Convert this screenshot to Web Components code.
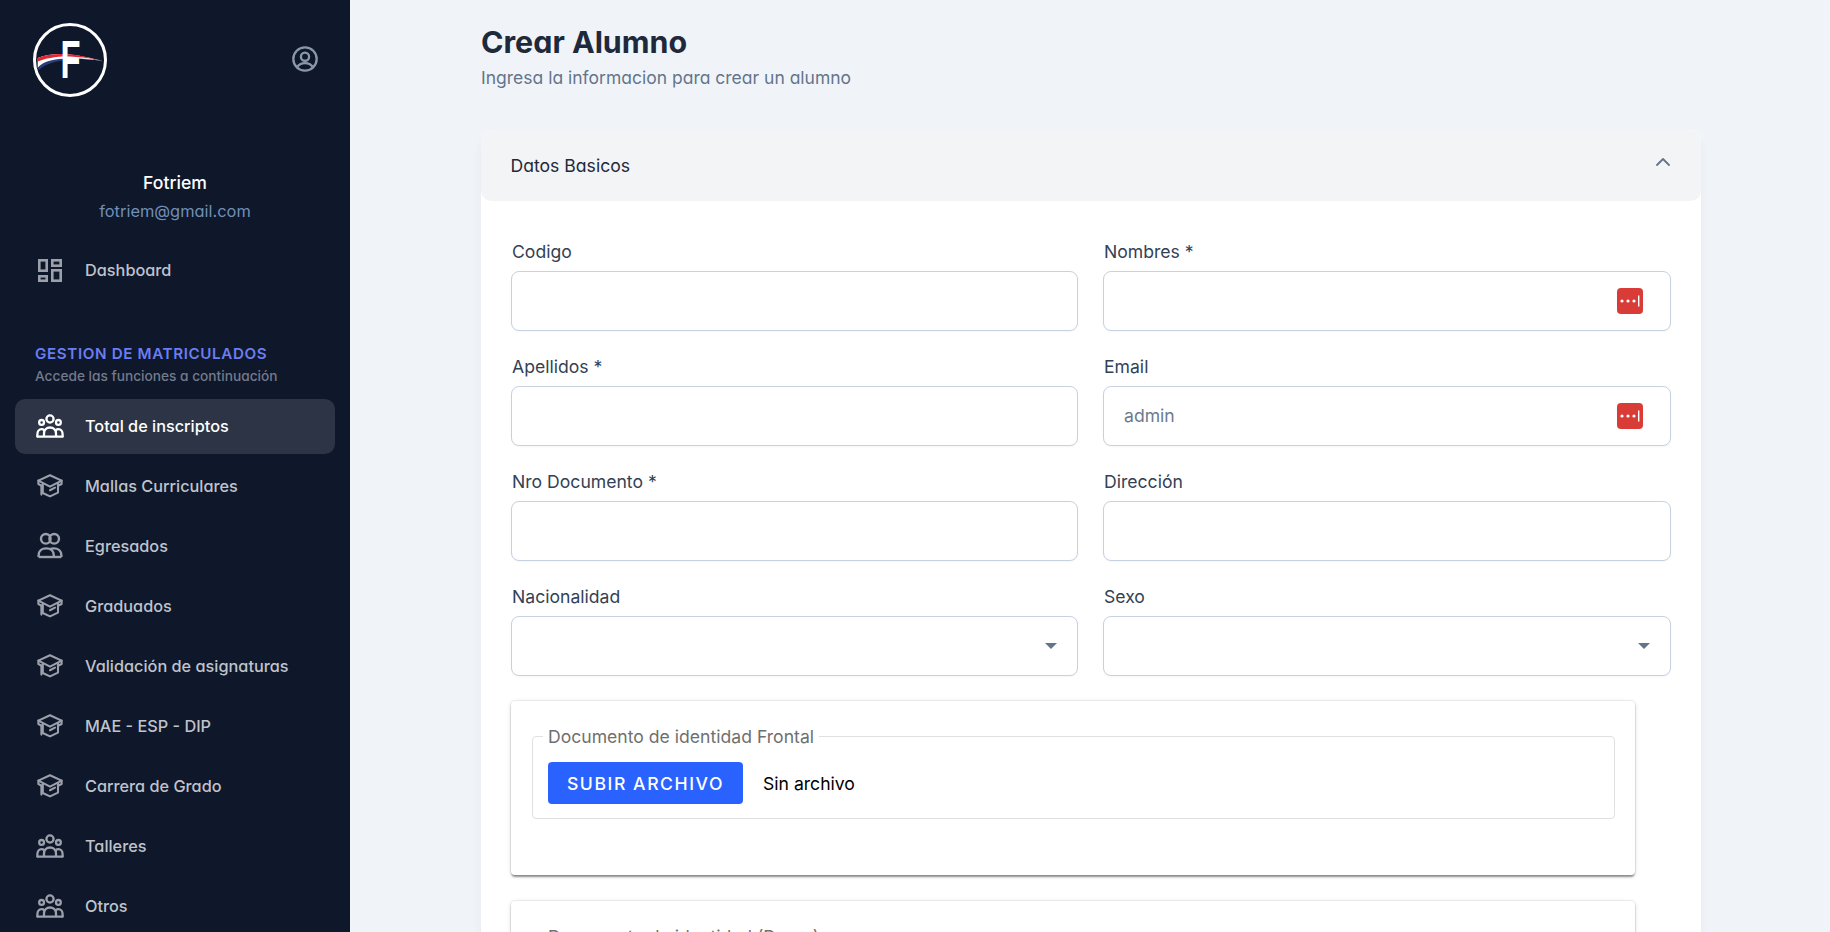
<!DOCTYPE html>
<html lang="es">
<head>
<meta charset="utf-8">
<title>Crear Alumno</title>
<style>
  html, body { margin: 0; height: 100%; overflow: hidden; background: #f0f4f9; }
  body { font-family: Inter, "Liberation Sans", sans-serif; }
</style>
</head>
<body>
<app-shell>
  <side-bar slot="side" name="Fotriem" email="fotriem@gmail.com">
    <nav-item icon="grid">Dashboard</nav-item>
    <nav-section slot="section" title-text="GESTION DE MATRICULADOS">Accede las funciones a continuación</nav-section>
    <nav-item slot="menu" icon="group" active>Total de inscriptos</nav-item>
    <nav-item slot="menu" icon="cap">Mallas Curriculares</nav-item>
    <nav-item slot="menu" icon="pair">Egresados</nav-item>
    <nav-item slot="menu" icon="cap">Graduados</nav-item>
    <nav-item slot="menu" icon="cap">Validación de asignaturas</nav-item>
    <nav-item slot="menu" icon="cap">MAE - ESP - DIP</nav-item>
    <nav-item slot="menu" icon="cap">Carrera de Grado</nav-item>
    <nav-item slot="menu" icon="group">Talleres</nav-item>
    <nav-item slot="menu" icon="group">Otros</nav-item>
  </side-bar>

  <page-head heading="Crear Alumno">Ingresa la informacion para crear un alumno</page-head>

  <acc-card heading="Datos Basicos">
    <form-grid>
      <form-field label="Codigo"></form-field>
      <form-field label="Nombres *" keyed></form-field>
      <form-field label="Apellidos *"></form-field>
      <form-field label="Email" value="admin" keyed></form-field>
      <form-field label="Nro Documento *"></form-field>
      <form-field label="Dirección"></form-field>
      <form-field label="Nacionalidad" select></form-field>
      <form-field label="Sexo" select></form-field>
    </form-grid>
    <file-card legend="Documento de identidad Frontal"></file-card>
    <file-card legend="Documento de identidad (Dorso)"></file-card>
  </acc-card>
</app-shell>

<script>
(function () {
  'use strict';

  const UI_FONT = 'Inter, "Liberation Sans", sans-serif';

  /** Sidebar icons, all drawn on a 28 box with currentColor strokes. */
  const ICONS = {
    grid: `
      <g fill="none" stroke="currentColor" stroke-width="2.6">
        <rect x="3.3" y="4.3" width="7.4" height="10.4"/>
        <rect x="16.3" y="4.3" width="8.4" height="5.4"/>
        <rect x="3.3" y="20.3" width="7.4" height="4.4"/>
        <rect x="16.3" y="14.3" width="8.4" height="10.4"/>
      </g>`,
    group: `
      <g fill="none" stroke="currentColor" stroke-width="2.3" stroke-linecap="round" stroke-linejoin="round">
        <circle cx="14" cy="7" r="3.6"/>
        <circle cx="5.6" cy="10.4" r="2.4"/>
        <circle cx="22.4" cy="10.4" r="2.4"/>
        <path d="M8 24v-2.5c0-3.600 2.700-6 6-6s6 2.400 6 6V24"/>
        <path d="M1.400 24.400v-2.200c0-3 1.900-5 4.200-5 1 0 1.900.3 2.600 1"/>
        <path d="M26.600 24.400v-2.200c0-3-1.900-5-4.200-5-1 0-1.900.3-2.600 1"/>
        <path d="M1.400 24.600h25.200"/>
      </g>`,
    cap: `
      <g fill="none" stroke="currentColor" stroke-width="2.1" stroke-linejoin="round" stroke-linecap="round">
        <path d="M14 3.200 25.600 8.600 14 14.600 2.400 8.600z"/>
        <path d="M2.400 8.600v3.400l3 1.600"/>
        <path d="M6.800 12v9l7.200 3.400 8-3.800v-9"/>
        <path d="M25.600 8.600v3.400l-3.600 1.800"/>
        <path d="M14 18.200l5-2.600"/>
        <path d="M5.400 13.600v9"/>
      </g>`,
    pair: `
      <g fill="none" stroke="currentColor" stroke-width="2.4" stroke-linejoin="round">
        <circle cx="9.800" cy="6.800" r="4.800"/>
        <circle cx="18.200" cy="6.800" r="4.800"/>
        <path d="M2.600 25v-1.600c0-4.400 3.400-7 7.600-7s7.600 2.600 7.600 7V25"/>
        <path d="M14 17.200c1.100-.5 2.400-.8 3.800-.8 4.200 0 7.600 2.600 7.600 7V25"/>
        <path d="M2.600 25h22.800"/>
      </g>`,
  };

  /**
   * Create a shadow root from a style + markup string.
   * @param {HTMLElement} host
   * @param {string} html
   */
  function render(host, html) {
    if (!host.shadowRoot) host.attachShadow({ mode: 'open' });
    host.shadowRoot.innerHTML = html;
  }

  class AppShell extends HTMLElement {
    connectedCallback() {
      render(this, `
        <style>
          :host { display: flex; height: 932px; overflow: hidden; background: #f0f4f9; }
          .side { flex: 0 0 350px; display: block; }
          main { flex: 1; min-width: 0; padding: 0 0 0 131px; overflow: hidden; }
          .col { width: 1220px; }
        </style>
        <div class="side"><slot name="side"></slot></div>
        <main><div class="col"><slot></slot></div></main>
      `);
    }
  }

  class SideBar extends HTMLElement {
    connectedCallback() {
      render(this, `
        <style>
          :host {
            display: block; height: 932px; background: #0f172a; overflow: hidden;
            font-family: ${UI_FONT}; font-feature-settings: "cv11";
          }
          .top { display: flex; justify-content: space-between; align-items: center; padding: 23px 31px 0 33px; }
          .logo { display: block; width: 74px; height: 74px; }
          .logo text { font-family: "Liberation Sans", sans-serif; font-weight: 700; }
          .user { display: block; width: 28px; height: 28px; margin-bottom: 2px; color: #8a97ab; }
          .who { text-align: center; margin-top: 73px; }
          .name { font-size: 17.600px; line-height: 26px; font-weight: 500; color: #fff; }
          .mail { font-size: 16.400px; line-height: 24px; margin-top: 3px; color: #6f8fb8; }
          .dash { display: block; padding: 19.500px 15px 0; }
          .menu { display: flex; flex-direction: column; gap: 5px; padding: 13px 15px 0; }
        </style>
        <div class="top">
          <svg class="logo" viewBox="0 0 74 74" aria-hidden="true">
            <circle cx="37" cy="37" r="35.500" fill="none" stroke="#fff" stroke-width="3"/>
            <path d="M4.700 35C12 32 22 30.500 35 31.300 46 32 58 35.500 68.700 37.700 58 36.500 48 35.500 40 35.500 26 35.500 14 39 4.700 45z" fill="#fff"/>
            <path d="M4.700 35C12 32 22 30.500 35 31.300 46 32 56 34.500 62 36 50 34.500 42 33.500 34 33.500 22 33.500 12 35.500 4.700 38.500z" fill="#e32636"/>
            <path d="M4.700 45C8 40 16 37 26 36 36 35 46 35 56 35.800 46 35.800 40 36 34 37 22 38 12 41 6 47z" fill="#2a3d78"/>
            <path d="M60 36.300 69 37.800" stroke="#5a6070" stroke-width=".8" fill="none"/>
            <text x="27.500" y="55" font-size="54" fill="#fff" textLength="20" lengthAdjust="spacingAndGlyphs">F</text>
          </svg>
          <svg class="user" viewBox="0 0 24 24" fill="none" stroke="currentColor" stroke-width="2" stroke-linecap="round" stroke-linejoin="round">
            <circle cx="12" cy="12" r="10"/>
            <circle cx="12" cy="10" r="3.500"/>
            <path d="M5.200 19.200c1.300-2.500 3.900-3.700 6.800-3.700s5.500 1.200 6.800 3.700"/>
          </svg>
        </div>
        <div class="who">
          <div class="name">${this.getAttribute('name')}</div>
          <div class="mail">${this.getAttribute('email')}</div>
        </div>
        <div class="dash"><slot></slot></div>
        <slot name="section"></slot>
        <div class="menu"><slot name="menu"></slot></div>
      `);
    }
  }

  class NavSection extends HTMLElement {
    connectedCallback() {
      render(this, `
        <style>
          :host { display: block; padding: 46.500px 15px 0 35px; }
          .t { font-size: 15.200px; line-height: 20px; font-weight: 600; letter-spacing: .62px; color: #6a7df2; }
          .s { font-size: 13.700px; line-height: 20px; margin-top: 2px; font-weight: 500; color: #737a8c; }
        </style>
        <div class="t">${this.getAttribute('title-text')}</div>
        <div class="s"><slot></slot></div>
      `);
    }
  }

  class NavItem extends HTMLElement {
    connectedCallback() {
      const icon = ICONS[this.getAttribute('icon')] || '';
      render(this, `
        <style>
          :host {
            display: flex; align-items: center; gap: 21px; height: 55px; padding-left: 21px;
            border-radius: 10px; color: #bfc3cc; font-size: 16.300px; font-weight: 500;
          }
          :host([active]) { background: #2d3446; color: #fff; }
          svg { flex: none; display: block; width: 28px; height: 28px; color: #9ca0aa; }
          :host([active]) svg { color: #fff; }
          :host([slot="menu"]) span { margin-bottom: 2px; }
          :host([slot="menu"]) svg { margin-bottom: 1px; }
        </style>
        <svg viewBox="0 0 28 28" aria-hidden="true">${icon}</svg>
        <span><slot></slot></span>
      `);
    }
  }

  class PageHead extends HTMLElement {
    connectedCallback() {
      render(this, `
        <style>
          :host { display: block; padding: 22px 0 0; font-family: ${UI_FONT}; font-feature-settings: "cv11"; }
          h1 { margin: 0; font-size: 30.400px; line-height: 40px; font-weight: 700; color: #1e293b; }
          p { margin: 4px 0 0; font-size: 17.500px; line-height: 24px; color: #64748b; }
        </style>
        <h1>${this.getAttribute('heading')}</h1>
        <p><slot></slot></p>
      `);
    }
  }

  class AccCard extends HTMLElement {
    connectedCallback() {
      render(this, `
        <style>
          :host {
            display: block; margin-top: 40px; background: #fff; border-radius: 10px;
            box-shadow: 0 8px 13px -3px rgba(0, 0, 0, .07);
            font-family: ${UI_FONT};
          }
          header {
            display: flex; justify-content: space-between; align-items: center;
            height: 71px; padding: 0 30px 0 29.500px; box-sizing: border-box;
            background: #f3f4f6; border-radius: 10px;
          }
          h2 { margin: 0; font-size: 17.600px; font-weight: 400; color: #1e293b; font-feature-settings: "cv11"; }
          svg { display: block; width: 16px; height: 10px; margin: 0 0 8px 0; color: #64748b; }
          .body { padding: 38px 30px 40px; }
        </style>
        <header>
          <h2>${this.getAttribute('heading')}</h2>
          <svg viewBox="0 0 16 10" fill="none" stroke="currentColor" stroke-width="1.800" stroke-linecap="round" stroke-linejoin="round"><path d="M2 8l6-6 6 6"/></svg>
        </header>
        <div class="body"><slot></slot></div>
      `);
    }
  }

  class FormGrid extends HTMLElement {
    connectedCallback() {
      render(this, `
        <style>:host { display: grid; grid-template-columns: 567px 568px; column-gap: 25px; row-gap: 23px; width: 1160px; }</style>
        <slot></slot>
      `);
    }
  }

  class FormField extends HTMLElement {
    connectedCallback() {
      const value = this.getAttribute('value') || '';
      const keyed = this.hasAttribute('keyed')
        ? `<svg class="key" viewBox="0 0 26 26" aria-hidden="true">
             <rect width="26" height="26" rx="4" fill="#d93c37"/>
             <circle cx="5" cy="13" r="1.600" fill="#fff"/>
             <circle cx="11" cy="13" r="1.600" fill="#fff"/>
             <circle cx="17" cy="13" r="1.600" fill="#fff"/>
             <rect x="21" y="7.500" width="1.400" height="11" fill="#fff"/>
           </svg>`
        : '';
      const arrow = this.hasAttribute('select') ? '<i class="arrow"></i>' : '';
      render(this, `
        <style>
          :host { display: block; }
          label { display: block; font-size: 17.600px; line-height: 26px; margin-bottom: 6px; padding-left: 1px; color: #334155; }
          .box {
            display: flex; align-items: center; justify-content: space-between;
            height: 60px; box-sizing: border-box; padding: 0 27.500px 0 20px;
            border: 1px solid #c6d2e0; border-radius: 8px; background: #fff;
            box-shadow: 0 1px 2px rgba(15, 23, 42, .04);
          }
          .val { font-size: 17.600px; color: #6b7a90; margin-bottom: 2px; }
          .key { display: block; width: 26px; height: 26px; flex: none; }
          .arrow {
            width: 0; height: 0; margin-right: -7.500px; margin-left: auto;
            border-left: 6px solid transparent; border-right: 6px solid transparent; border-top: 6px solid #64748b;
          }
        </style>
        <label>${this.getAttribute('label')}</label>
        <div class="box"><span class="val">${value}</span>${keyed}${arrow}</div>
      `);
    }
  }

  class FileCard extends HTMLElement {
    connectedCallback() {
      render(this, `
        <style>
          :host {
            display: block; width: 1124px; height: 174px; box-sizing: border-box; margin-top: 25px;
            padding: 24px 20px 0 21px; background: #fff; border-radius: 4px;
            box-shadow: 0 0 0 1px rgba(0, 0, 0, .05), 0 3px 2px -1px rgba(0, 0, 0, .28), 0 2px 2px 0 rgba(0, 0, 0, .14), 0 1px 5px 0 rgba(0, 0, 0, .12);
          }
          :host(:last-child) { margin-top: 26px; }
          fieldset {
            margin: 0; padding: 15px 15px 14px; min-width: 0;
            border: 1px solid #e0e0e0; border-radius: 4px;
          }
          legend { padding: 1px 5px 0; margin: 0 0 -1px -5px; font-size: 17.600px; line-height: 22px; color: #6f6f6f; }
          .row { display: flex; align-items: center; gap: 20px; }
          button {
            height: 42px; width: 195px; padding: 0; border: 0; border-radius: 4px; background: #2962ff; color: #fff;
            font: 500 17.600px ${UI_FONT}; letter-spacing: 1.560px;
          }
          span { font-size: 17.600px; color: #000; }
        </style>
        <fieldset>
          <legend>${this.getAttribute('legend')}</legend>
          <div class="row"><button type="button">SUBIR ARCHIVO</button><span>Sin archivo</span></div>
        </fieldset>
      `);
    }
  }

  customElements.define('app-shell', AppShell);
  customElements.define('side-bar', SideBar);
  customElements.define('nav-section', NavSection);
  customElements.define('nav-item', NavItem);
  customElements.define('page-head', PageHead);
  customElements.define('acc-card', AccCard);
  customElements.define('form-grid', FormGrid);
  customElements.define('form-field', FormField);
  customElements.define('file-card', FileCard);
})();
</script>
</body>
</html>
